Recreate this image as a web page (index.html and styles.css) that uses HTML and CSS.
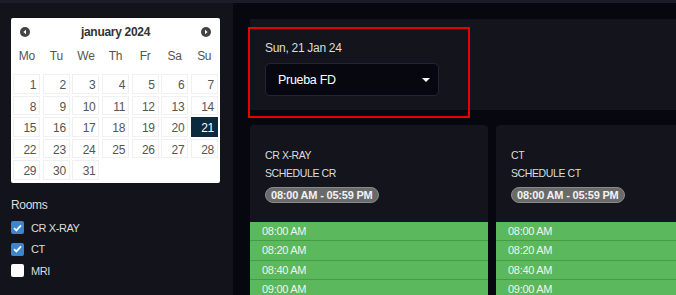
FILE: index.html
```html
<!DOCTYPE html>
<html lang="en">
<head>
    <meta charset="UTF-8">
    <meta name="viewport" content="width=device-width, initial-scale=1.0">
    <title>Room Schedule</title>
    <link rel="stylesheet" href="styles.css">
</head>
<body>
    <div class="topbar"></div>
    <div class="layout">
        <aside class="sidebar">
            <div class="calendar">
                <div class="cal-head">
                    <span class="cal-arrow"><svg width="10" height="10" viewBox="0 0 10 10"><circle cx="5" cy="5" r="5" fill="#444"/><path d="M6 2.8 L3.4 5 L6 7.2 Z" fill="#fff"/></svg></span>
                    <span class="cal-title">january 2024</span>
                    <span class="cal-arrow"><svg width="10" height="10" viewBox="0 0 10 10"><circle cx="5" cy="5" r="5" fill="#444"/><path d="M4 2.8 L6.6 5 L4 7.2 Z" fill="#fff"/></svg></span>
                </div>
                <div class="cal-days">
                    <span>Mo</span><span>Tu</span><span>We</span><span>Th</span><span>Fr</span><span>Sa</span><span>Su</span>
                </div>
                <div class="cal-grid">
                    <span>1</span><span>2</span><span>3</span><span>4</span><span>5</span><span>6</span><span>7</span>
                    <span>8</span><span>9</span><span>10</span><span>11</span><span>12</span><span>13</span><span>14</span>
                    <span>15</span><span>16</span><span>17</span><span>18</span><span>19</span><span>20</span><span class="active">21</span>
                    <span>22</span><span>23</span><span>24</span><span>25</span><span>26</span><span>27</span><span>28</span>
                    <span>29</span><span>30</span><span>31</span>
                </div>
            </div>

            <div class="rooms">
                <p class="rooms-title">Rooms</p>
                <label class="room"><span class="check on"><svg width="9" height="8" viewBox="0 0 9 8"><path d="M1 4.2 L3.4 6.4 L8 1.4" stroke="#fff" stroke-width="1.8" fill="none"/></svg></span>CR X-RAY</label>
                <label class="room"><span class="check on"><svg width="9" height="8" viewBox="0 0 9 8"><path d="M1 4.2 L3.4 6.4 L8 1.4" stroke="#fff" stroke-width="1.8" fill="none"/></svg></span>CT</label>
                <label class="room"><span class="check"></span>MRI</label>
            </div>
        </aside>

        <main class="main">
            <div class="panel">
                <p class="panel-date">Sun, 21 Jan 24</p>
                <div class="select">
                    <span>Prueba FD</span>
                    <svg width="8" height="4" viewBox="0 0 8 4"><path d="M0 0 L8 0 L4 4 Z" fill="#fff"/></svg>
                </div>
            </div>
            <div class="highlight"></div>

            <div class="cards">
                <div class="card">
                    <div class="card-head">
                        <p>CR X-RAY</p>
                        <p>SCHEDULE CR</p>
                        <span class="badge">08:00 AM - 05:59 PM</span>
                    </div>
                    <div class="slot">08:00 AM</div>
                    <div class="slot">08:20 AM</div>
                    <div class="slot">08:40 AM</div>
                    <div class="slot">09:00 AM</div>
                </div>
                <div class="card">
                    <div class="card-head">
                        <p>CT</p>
                        <p>SCHEDULE CT</p>
                        <span class="badge">08:00 AM - 05:59 PM</span>
                    </div>
                    <div class="slot">08:00 AM</div>
                    <div class="slot">08:20 AM</div>
                    <div class="slot">08:40 AM</div>
                    <div class="slot">09:00 AM</div>
                </div>
            </div>
        </main>
    </div>
</body>
</html>
```

FILE: styles.css
```css
*{
    margin: 0;
    padding: 0;
    box-sizing: border-box;
    font-family: "Liberation Sans", Arial, sans-serif;
}
body{
    background: #07080f;
    width: 676px;
    height: 295px;
    overflow: hidden;
    letter-spacing: -0.3px;
}
.topbar{
    height: 3px;
    background: #1b1c26;
}
.layout{
    display: flex;
    height: 292px;
}
.sidebar{
    width: 233px;
    flex-shrink: 0;
    background: #13131c;
    padding: 15px 0 0 11px;
}
.calendar{
    width: 209px;
    height: 165px;
    background: #fff;
    border-radius: 2px;
    padding: 6px 2px 0 2px;
}
.cal-head{
    display: flex;
    justify-content: space-between;
    align-items: center;
    height: 15px;
    padding: 0 7px 0 7px;
}
.cal-arrow{
    display: flex;
}
.cal-title{
    font-size: 12px;
    font-weight: bold;
    color: #333;
}
.cal-days{
    display: grid;
    grid-template-columns: repeat(7, 1fr);
    gap: 2px;
    height: 34px;
    align-items: center;
    font-size: 12px;
    color: #555;
    text-align: center;
}
.cal-grid{
    display: grid;
    grid-template-columns: repeat(7, 1fr);
    gap: 2px 2.4px;
    margin-top: 1px;
}
.cal-grid span{
    height: 19.5px;
    border: 1px solid #f0f0f0;
    font-size: 12px;
    color: #555;
    text-align: right;
    padding: 3px 3px 0 0;
}
.cal-grid span.active{
    background: #0c2a3e;
    border-color: #0c2a3e;
    color: #fff;
}
.rooms{
    padding-top: 15px;
}
.rooms-title{
    font-size: 12px;
    color: #ddd;
    margin-bottom: 9px;
}
.room{
    display: flex;
    align-items: center;
    gap: 7px;
    height: 13px;
    margin-bottom: 8.5px;
    font-size: 11px;
    color: #ddd;
    letter-spacing: -0.4px;
}
.check{
    width: 13px;
    height: 13px;
    border-radius: 2px;
    background: #fff;
    display: flex;
    align-items: center;
    justify-content: center;
}
.check.on{
    background: #3b86d0;
}
.main{
    flex: 1;
    position: relative;
    padding: 16px 0 0 17px;
    overflow: hidden;
}
.panel{
    height: 91px;
    background: #13141c;
    padding: 22px 0 0 15px;
}
.panel-date{
    font-size: 12px;
    color: #ddd;
    margin-bottom: 8px;
}
.select{
    width: 174px;
    height: 33px;
    background: #07080f;
    border: 1px solid #24252f;
    border-radius: 5px;
    display: flex;
    align-items: center;
    justify-content: space-between;
    padding: 0 8px 0 12px;
    font-size: 12.5px;
    color: #fff;
}
.highlight{
    position: absolute;
    left: 15px;
    top: 24px;
    width: 222px;
    height: 91px;
    border: 2px solid #e60000;
}
.cards{
    display: flex;
    gap: 8px;
    margin-top: 15px;
}
.card{
    width: 238px;
    flex-shrink: 0;
    background: #13141c;
    border-radius: 4px 4px 0 0;
}
.card-head{
    height: 97px;
    padding: 24px 15px 0 15px;
}
.card-head p{
    font-size: 10.5px;
    letter-spacing: -0.4px;
    color: #ddd;
    margin-bottom: 6px;
}
.badge{
    display: inline-block;
    margin-top: 1px;
    background: #6a6a6a;
    border: 1px solid #8a8a8a;
    border-radius: 8px;
    padding: 1px 5px;
    font-size: 11px;
    font-weight: bold;
    letter-spacing: -0.2px;
    color: #f2f2f2;
}
.slot{
    height: 19.4px;
    background: #5cb85c;
    border-bottom: 1px solid #449d44;
    padding: 3px 0 0 12px;
    font-size: 11px;
    color: #eef6ee;
}
.slot:first-of-type{
    border-radius: 3px 3px 0 0;
}
```
